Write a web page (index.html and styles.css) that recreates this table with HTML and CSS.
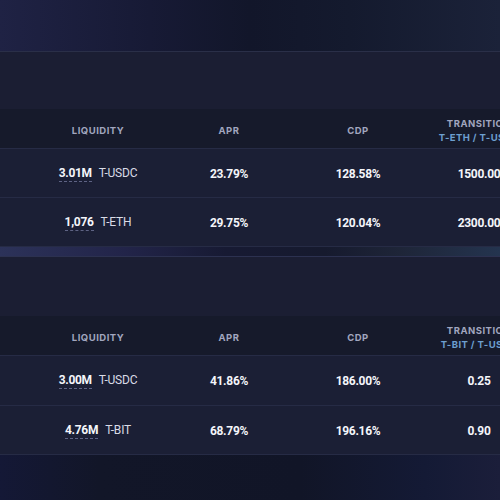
FILE: index.html
```html
<!DOCTYPE html>
<html lang="en">
<head>
  <meta charset="UTF-8">
  <meta name="viewport" content="width=device-width, initial-scale=1.0">
  <title>Pools</title>
  <link rel="stylesheet" href="styles.css">
</head>
<body>
  <div class="page">
    <div class="top-bg"></div>

    <!-- T-ETH pool -->
    <section class="pool-card">
      <div class="card-head"></div>
      <div class="pool-table">
        <div class="row head">
          <div class="cell">Liquidity</div>
          <div class="cell">APR</div>
          <div class="cell">CDP</div>
          <div class="cell">Transition<span class="pair">T-ETH / T-USDC</span></div>
        </div>
        <div class="row">
          <div class="cell"><span class="amount">3.01M</span><span class="token">T-USDC</span></div>
          <div class="cell value">23.79%</div>
          <div class="cell value">128.58%</div>
          <div class="cell value">1500.00</div>
        </div>
        <div class="row">
          <div class="cell"><span class="amount">1,076</span><span class="token">T-ETH</span></div>
          <div class="cell value">29.75%</div>
          <div class="cell value">120.04%</div>
          <div class="cell value">2300.00</div>
        </div>
      </div>
    </section>

    <div class="divider"></div>

    <!-- T-BIT pool -->
    <section class="pool-card second">
      <div class="card-head"></div>
      <div class="pool-table">
        <div class="row head">
          <div class="cell">Liquidity</div>
          <div class="cell">APR</div>
          <div class="cell">CDP</div>
          <div class="cell">Transition<span class="pair">T-BIT / T-USDC</span></div>
        </div>
        <div class="row">
          <div class="cell"><span class="amount">3.00M</span><span class="token">T-USDC</span></div>
          <div class="cell value">41.86%</div>
          <div class="cell value">186.00%</div>
          <div class="cell value">0.25</div>
        </div>
        <div class="row">
          <div class="cell"><span class="amount">4.76M</span><span class="token">T-BIT</span></div>
          <div class="cell value">68.79%</div>
          <div class="cell value">196.16%</div>
          <div class="cell value">0.90</div>
        </div>
      </div>
    </section>

    <div class="bottom-bg"></div>
  </div>
</body>
</html>
```

FILE: styles.css
```css
:root {
  --card-color: #1b1e33;
  --head-color: #161a2b;
  --row-color: #1b1f35;
  --line-color: #262b45;
  --label-color: #a1a6bf;
  --value-color: #f4f5fa;
  --token-color: #d9dbe6;
  --pair-color: #6d9fcf;
}

* {
  margin: 0;
  padding: 0;
  box-sizing: border-box;
}

body {
  width: 500px;
  height: 500px;
  overflow: hidden;
  background-color: #121628;
  font-family: Inter, 'Noto Sans', sans-serif;
}

.page {
  display: flex;
  flex-direction: column;
  width: 500px;
}

.top-bg {
  height: 52px;
  background: linear-gradient(90deg, #1f2244 0%, #171a35 30%, #12162a 50%, #141a2e 70%, #1b2239 100%);
  border-bottom: 1px solid #2a2f48;
}

.card-head {
  height: 57px;
  background-color: var(--card-color);
}

.second .card-head {
  height: 59px;
}

.row {
  display: grid;
  grid-template-columns: 132px 130px 128px 114px;
  padding-left: 32px;
  padding-top: 2px;
  width: 560px;
  height: 49px;
  align-items: center;
  background-color: var(--row-color);
  border-bottom: 1px solid var(--line-color);
}

.second .row {
  height: 49.5px;
}

.row.head {
  height: 40px;
  padding-top: 4px;
  background-color: var(--head-color);
}

.cell {
  display: flex;
  justify-content: center;
  align-items: baseline;
  text-align: center;
  white-space: nowrap;
}

.head .cell {
  flex-direction: column;
  align-items: center;
  font-size: 9.5px;
  font-weight: 700;
  letter-spacing: 0.5px;
  text-transform: uppercase;
  color: var(--label-color);
  line-height: 14px;
}

.pair {
  color: var(--pair-color);
  letter-spacing: 0.4px;
}

.value,
.amount {
  font-family: Roboto, 'Liberation Sans', sans-serif;
  font-size: 12px;
  font-weight: 700;
  letter-spacing: -0.3px;
  color: var(--value-color);
}

.amount {
  border-bottom: 1px dashed #5e6384;
  line-height: 15px;
  margin-right: 7px;
}

.token {
  font-family: Roboto, 'Liberation Sans', sans-serif;
  font-size: 12px;
  letter-spacing: -0.2px;
  color: var(--token-color);
}

.divider {
  height: 10px;
  background: linear-gradient(90deg, #2c3259 0%, #222449 25%, #171a33 45%, #161a2e 65%, #1e2538 80%, #24344f 100%);
  border-bottom: 1px solid #2c3150;
}

.bottom-bg {
  height: 60px;
  background: linear-gradient(90deg, #141836 0%, #121628 20%, #111527 60%, #141a35 85%, #1b1e3a 100%);
}
```
